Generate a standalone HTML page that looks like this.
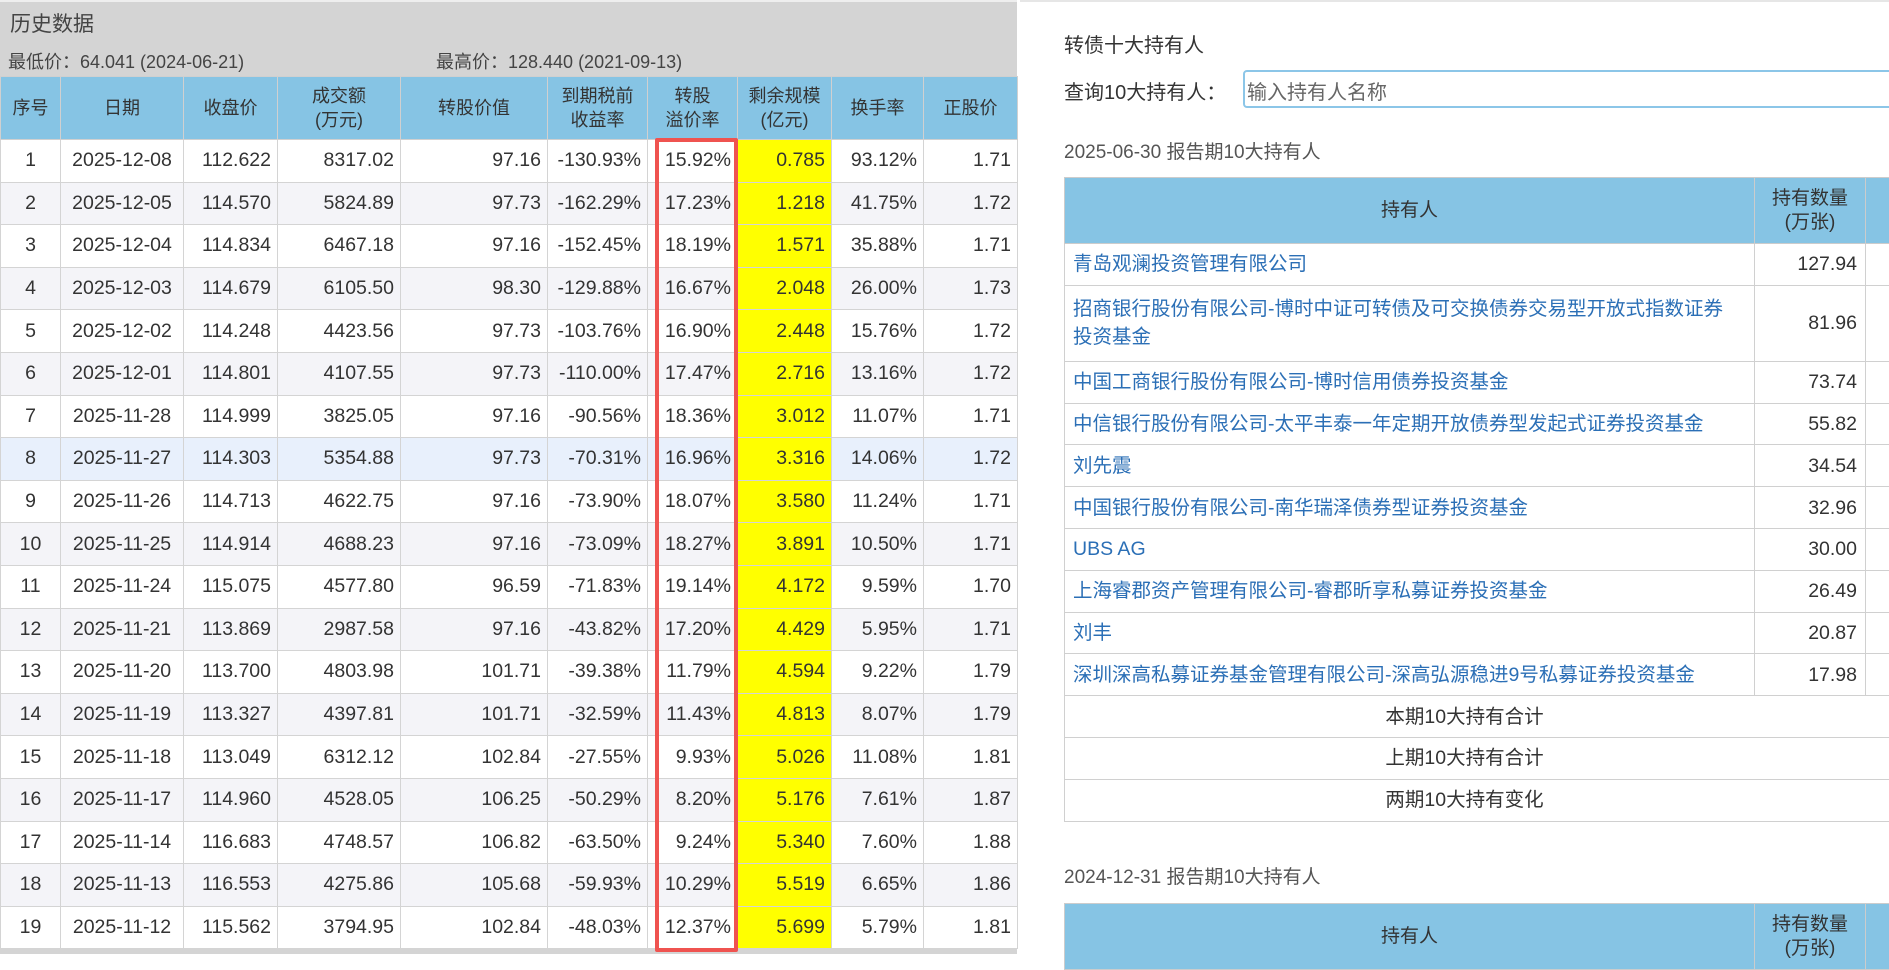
<!DOCTYPE html>
<html><head><meta charset="utf-8">
<style>
*{box-sizing:border-box;margin:0;padding:0}
body{width:1889px;height:954px;overflow:hidden;background:#fff;font-family:"Liberation Sans","Noto Sans CJK SC",sans-serif;color:#333;position:relative}
#left{position:absolute;left:0;top:0;width:1017px;height:954px;background:#d4d4d4;border-top:2px solid #eee}
#left .t{position:absolute;left:10px;top:6px;font-size:21px;color:#444}
#left .lo{position:absolute;left:8px;top:46px;font-size:18px;color:#444}
#left .hi{position:absolute;left:436px;top:46px;font-size:18px;color:#444}
table{border-collapse:collapse;table-layout:fixed}
#lt{position:absolute;left:0;top:74px;width:1017px}
#lt th{background:#86c4e4;font-weight:normal;font-size:18px;color:#333;height:63px;border:1px solid #d0d0d0;line-height:24px}
#lt td{height:42.6px;font-size:19.5px;border:1px solid #d4d4d4;text-align:right;padding-right:6px;color:#333}
#lt tr:nth-child(odd) td{background:#f4f4f8}
#lt tr:nth-child(even) td{background:#fff}
#lt tr.hl td{background:#e8f0fc}
#lt td.c{text-align:center;padding:0}
#lt td.y{background:#ffff00!important}
#red{position:absolute;left:655px;top:136px;width:83px;height:814px;border:4px solid #ef5350;border-radius:2px}
#right{position:absolute;left:1020px;top:0;width:869px;height:954px;border-top:2px solid #e6e6e6}
.h1{position:absolute;left:44px;top:27px;font-size:20px;color:#333}
.q{position:absolute;left:44px;top:74px;font-size:20px;color:#333}
.inp{position:absolute;left:223px;top:68px;width:660px;height:38px;border:2px solid #8cc6e8;border-radius:4px;font-size:20px;color:#666;padding:4px 2px}
.sub{position:absolute;left:44px;font-size:19px;color:#555}
.rt{position:absolute;left:44px;width:900px}
.rt th{background:#86c4e4;font-weight:normal;font-size:19px;border:1px solid #ccc;color:#333;line-height:24px}
.rt td{border:1px solid #d0d0d0;font-size:19.5px;height:41.8px;background:#fff;line-height:28px}
.rt td.n{color:#2b6fb6;padding-left:8px;padding-right:14px}
.rt td.v{text-align:right;padding-right:8px}
.rt td.s{text-align:center}
</style></head><body>
<div id="left">
<div class="t">历史数据</div>
<div class="lo">最低价：64.041 (2024-06-21)</div>
<div class="hi">最高价：128.440 (2021-09-13)</div>
<table id="lt">
<colgroup><col style="width:60px"><col style="width:123px"><col style="width:94px"><col style="width:123px"><col style="width:147px"><col style="width:100px"><col style="width:90px"><col style="width:94px"><col style="width:92px"><col style="width:94px"></colgroup>
<tr><th>序号</th><th>日期</th><th>收盘价</th><th>成交额<br>(万元)</th><th>转股价值</th><th>到期税前<br>收益率</th><th>转股<br>溢价率</th><th>剩余规模<br>(亿元)</th><th>换手率</th><th>正股价</th></tr>
<tr><td class="c">1</td><td class="c">2025-12-08</td><td>112.622</td><td>8317.02</td><td>97.16</td><td>-130.93%</td><td>15.92%</td><td class="y">0.785</td><td>93.12%</td><td>1.71</td></tr>
<tr><td class="c">2</td><td class="c">2025-12-05</td><td>114.570</td><td>5824.89</td><td>97.73</td><td>-162.29%</td><td>17.23%</td><td class="y">1.218</td><td>41.75%</td><td>1.72</td></tr>
<tr><td class="c">3</td><td class="c">2025-12-04</td><td>114.834</td><td>6467.18</td><td>97.16</td><td>-152.45%</td><td>18.19%</td><td class="y">1.571</td><td>35.88%</td><td>1.71</td></tr>
<tr><td class="c">4</td><td class="c">2025-12-03</td><td>114.679</td><td>6105.50</td><td>98.30</td><td>-129.88%</td><td>16.67%</td><td class="y">2.048</td><td>26.00%</td><td>1.73</td></tr>
<tr><td class="c">5</td><td class="c">2025-12-02</td><td>114.248</td><td>4423.56</td><td>97.73</td><td>-103.76%</td><td>16.90%</td><td class="y">2.448</td><td>15.76%</td><td>1.72</td></tr>
<tr><td class="c">6</td><td class="c">2025-12-01</td><td>114.801</td><td>4107.55</td><td>97.73</td><td>-110.00%</td><td>17.47%</td><td class="y">2.716</td><td>13.16%</td><td>1.72</td></tr>
<tr><td class="c">7</td><td class="c">2025-11-28</td><td>114.999</td><td>3825.05</td><td>97.16</td><td>-90.56%</td><td>18.36%</td><td class="y">3.012</td><td>11.07%</td><td>1.71</td></tr>
<tr class="hl"><td class="c">8</td><td class="c">2025-11-27</td><td>114.303</td><td>5354.88</td><td>97.73</td><td>-70.31%</td><td>16.96%</td><td class="y">3.316</td><td>14.06%</td><td>1.72</td></tr>
<tr><td class="c">9</td><td class="c">2025-11-26</td><td>114.713</td><td>4622.75</td><td>97.16</td><td>-73.90%</td><td>18.07%</td><td class="y">3.580</td><td>11.24%</td><td>1.71</td></tr>
<tr><td class="c">10</td><td class="c">2025-11-25</td><td>114.914</td><td>4688.23</td><td>97.16</td><td>-73.09%</td><td>18.27%</td><td class="y">3.891</td><td>10.50%</td><td>1.71</td></tr>
<tr><td class="c">11</td><td class="c">2025-11-24</td><td>115.075</td><td>4577.80</td><td>96.59</td><td>-71.83%</td><td>19.14%</td><td class="y">4.172</td><td>9.59%</td><td>1.70</td></tr>
<tr><td class="c">12</td><td class="c">2025-11-21</td><td>113.869</td><td>2987.58</td><td>97.16</td><td>-43.82%</td><td>17.20%</td><td class="y">4.429</td><td>5.95%</td><td>1.71</td></tr>
<tr><td class="c">13</td><td class="c">2025-11-20</td><td>113.700</td><td>4803.98</td><td>101.71</td><td>-39.38%</td><td>11.79%</td><td class="y">4.594</td><td>9.22%</td><td>1.79</td></tr>
<tr><td class="c">14</td><td class="c">2025-11-19</td><td>113.327</td><td>4397.81</td><td>101.71</td><td>-32.59%</td><td>11.43%</td><td class="y">4.813</td><td>8.07%</td><td>1.79</td></tr>
<tr><td class="c">15</td><td class="c">2025-11-18</td><td>113.049</td><td>6312.12</td><td>102.84</td><td>-27.55%</td><td>9.93%</td><td class="y">5.026</td><td>11.08%</td><td>1.81</td></tr>
<tr><td class="c">16</td><td class="c">2025-11-17</td><td>114.960</td><td>4528.05</td><td>106.25</td><td>-50.29%</td><td>8.20%</td><td class="y">5.176</td><td>7.61%</td><td>1.87</td></tr>
<tr><td class="c">17</td><td class="c">2025-11-14</td><td>116.683</td><td>4748.57</td><td>106.82</td><td>-63.50%</td><td>9.24%</td><td class="y">5.340</td><td>7.60%</td><td>1.88</td></tr>
<tr><td class="c">18</td><td class="c">2025-11-13</td><td>116.553</td><td>4275.86</td><td>105.68</td><td>-59.93%</td><td>10.29%</td><td class="y">5.519</td><td>6.65%</td><td>1.86</td></tr>
<tr><td class="c">19</td><td class="c">2025-11-12</td><td>115.562</td><td>3794.95</td><td>102.84</td><td>-48.03%</td><td>12.37%</td><td class="y">5.699</td><td>5.79%</td><td>1.81</td></tr>
</table>
<div id="red"></div>
</div>
<div id="right">
<div class="h1">转债十大持有人</div>
<div class="q">查询10大持有人：</div>
<div class="inp">输入持有人名称</div>
<div class="sub" style="top:135px">2025-06-30 报告期10大持有人</div>
<table class="rt" style="top:175px">
<colgroup><col style="width:690px"><col style="width:111px"><col style="width:99px"></colgroup>
<tr><th style="height:66px">持有人</th><th>持有数量<br>(万张)</th><th>数</th></tr>
<tr><td class="n">青岛观澜投资管理有限公司</td><td class="v">127.94</td><td></td></tr>
<tr><td class="n" style="height:76px">招商银行股份有限公司-博时中证可转债及可交换债券交易型开放式指数证券<br>投资基金</td><td class="v">81.96</td><td></td></tr>
<tr><td class="n">中国工商银行股份有限公司-博时信用债券投资基金</td><td class="v">73.74</td><td></td></tr>
<tr><td class="n">中信银行股份有限公司-太平丰泰一年定期开放债券型发起式证券投资基金</td><td class="v">55.82</td><td></td></tr>
<tr><td class="n">刘先震</td><td class="v">34.54</td><td></td></tr>
<tr><td class="n">中国银行股份有限公司-南华瑞泽债券型证券投资基金</td><td class="v">32.96</td><td></td></tr>
<tr><td class="n">UBS AG</td><td class="v">30.00</td><td></td></tr>
<tr><td class="n">上海睿郡资产管理有限公司-睿郡昕享私募证券投资基金</td><td class="v">26.49</td><td></td></tr>
<tr><td class="n">刘丰</td><td class="v">20.87</td><td></td></tr>
<tr><td class="n">深圳深高私募证券基金管理有限公司-深高弘源稳进9号私募证券投资基金</td><td class="v">17.98</td><td></td></tr>
<tr><td class="s" colspan="3" style="padding-right:100px">本期10大持有合计</td></tr>
<tr><td class="s" colspan="3" style="padding-right:100px">上期10大持有合计</td></tr>
<tr><td class="s" colspan="3" style="padding-right:100px">两期10大持有变化</td></tr>
</table>
<div class="sub" style="top:860px">2024-12-31 报告期10大持有人</div>
<table class="rt" style="top:901px">
<colgroup><col style="width:690px"><col style="width:111px"><col style="width:99px"></colgroup>
<tr><th style="height:66px">持有人</th><th>持有数量<br>(万张)</th><th>数</th></tr>
</table>
</div>
</body></html>
